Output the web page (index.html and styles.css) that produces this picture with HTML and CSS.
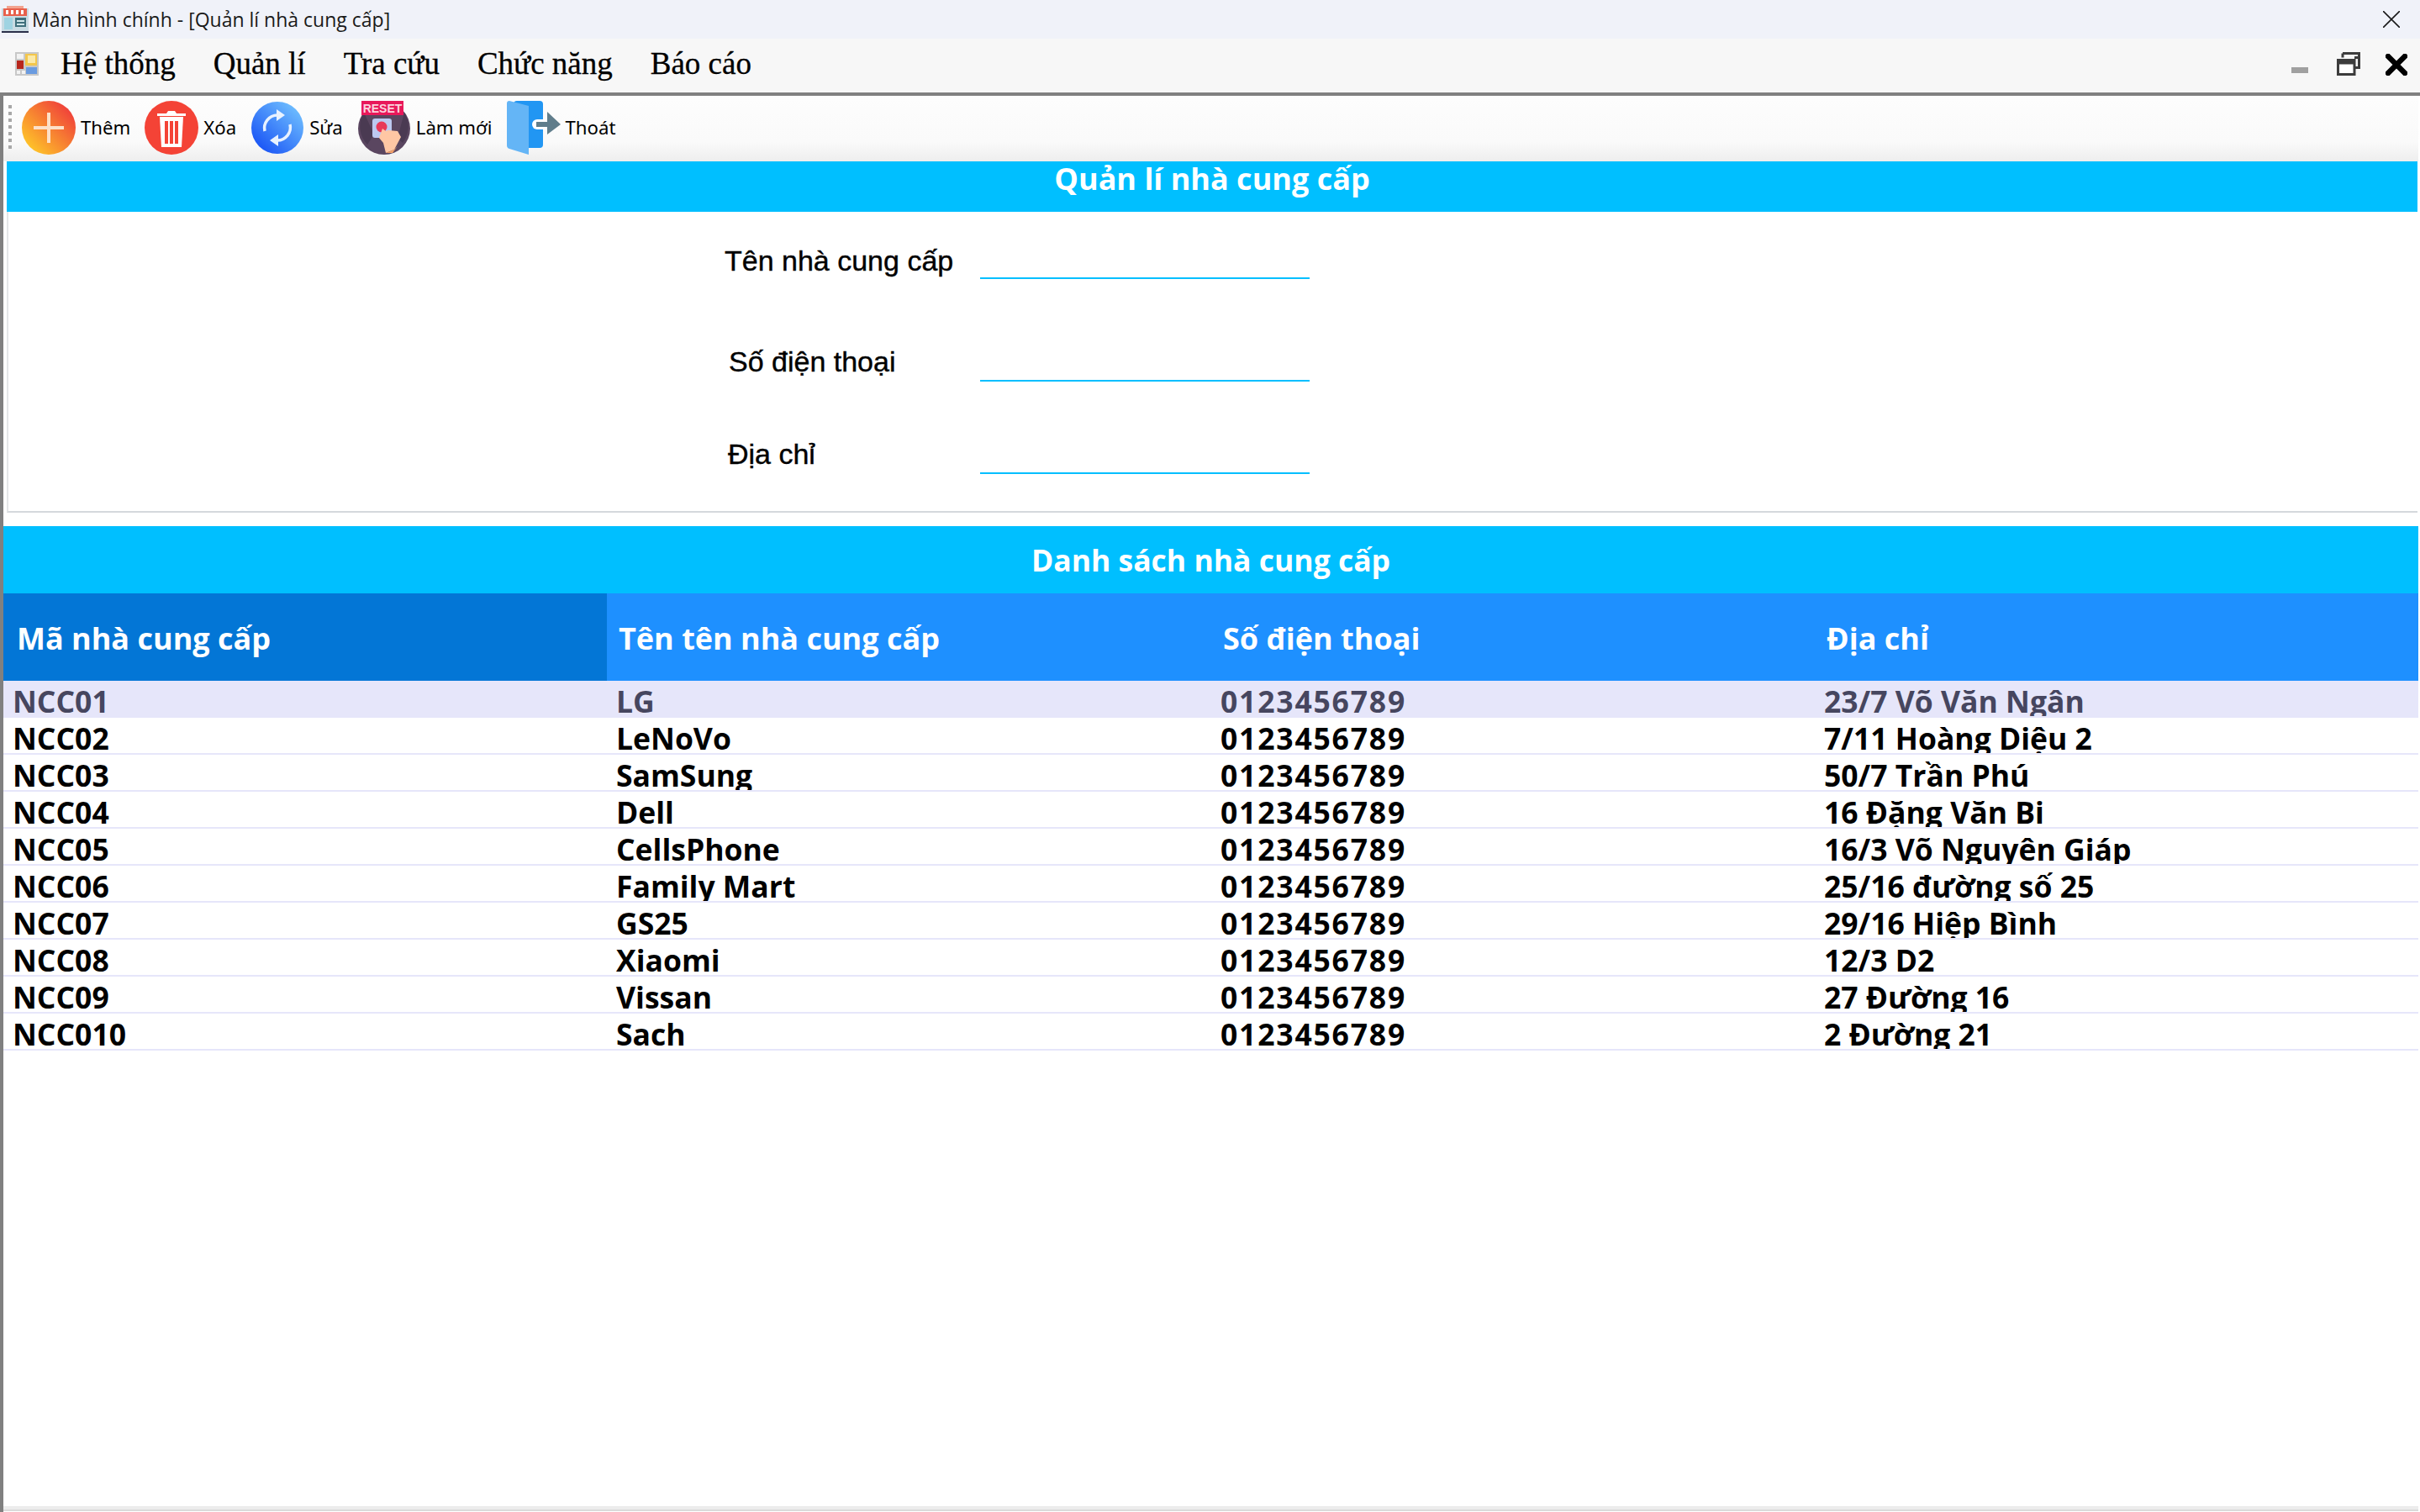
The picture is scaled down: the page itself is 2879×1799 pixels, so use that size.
FILE: index.html
```html
<!DOCTYPE html>
<html lang="vi">
<head>
    <meta charset="utf-8">
    <title>Màn hình chính</title>
    <link rel="stylesheet" href="styles.css">
</head>
<body>
    <div class="window">
        <!-- Title bar -->
        <div class="titlebar">
            <svg class="app-icon" viewBox="0 0 32 32">
                <rect x="0" y="3" width="32" height="27" fill="#c9dbe3"/>
                <rect x="2" y="3" width="28" height="9" fill="#e8604c"/>
                <path d="M5 5h3v5H5zM11 5h3v5h-3zM17 5h3v5h-3zM23 5h3v5h-3z" fill="#fff"/>
                <rect x="6" y="0" width="20" height="3" fill="#f2a38f"/>
                <path d="M3 14h10v14H3z" fill="#9fd3e2"/>
                <path d="M16 14h13v11H16z" fill="#3f6f7c"/>
                <path d="M18 17h9v2h-9zM18 21h9v2h-9z" fill="#cfe6ea"/>
                <rect x="0" y="30" width="32" height="2" fill="#2a2f4a"/>
            </svg>
            <span class="title-text">Màn hình chính - [Quản lí nhà cung cấp]</span>
            <svg class="title-close" viewBox="0 0 20 20">
                <path d="M0 0L20 20M20 0L0 20" stroke="#1a1a1a" stroke-width="1.6"/>
            </svg>
        </div>

        <!-- Menu -->
        <div class="menubar">
            <svg class="menu-icon" viewBox="0 0 28 28">
                <rect width="28" height="28" fill="#c8c8c8"/>
                <path d="M2 2h8v6H2zM2 22h4v4H2zM8 22h4v4H8z" fill="#f2f2f2"/>
                <rect x="2" y="10" width="8" height="10" fill="#b8261c"/>
                <rect x="12" y="2" width="14" height="14" fill="#f3c64b"/>
                <rect x="15" y="4" width="9" height="9" fill="#fbe9a8"/>
                <rect x="13" y="18" width="13" height="8" fill="#6a9be0"/>
            </svg>
            <span class="menu-item">Hệ thống</span>
            <span class="menu-item">Quản lí</span>
            <span class="menu-item">Tra cứu</span>
            <span class="menu-item">Chức năng</span>
            <span class="menu-item">Báo cáo</span>
            <div class="window-buttons">
                <svg class="btn-min" viewBox="0 0 20 8"><rect width="20" height="7" fill="#a0a0a0"/></svg>
                <svg class="btn-restore" viewBox="0 0 28 28">
                    <path d="M7 1.5h19.5v17H21M7 1.5v5M7 1.5h19.5v5H21" fill="none" stroke="#3c3c3c" stroke-width="3"/>
                    <rect x="1.5" y="9.5" width="19.5" height="17" fill="#fff" stroke="#3c3c3c" stroke-width="3"/>
                    <rect x="1.5" y="9.5" width="19.5" height="5" fill="#3c3c3c"/>
                </svg>
                <svg class="btn-close" viewBox="0 0 26 26">
                    <path d="M3 3L23 23M23 3L3 23" stroke="#000" stroke-width="6.5" stroke-linecap="square"/>
                </svg>
            </div>
        </div>

        <div class="workspace">
            <!-- Toolbar -->
            <div class="toolbar">
                <div class="grip"></div>
                <div class="tool">
                    <svg class="tool-icon" viewBox="0 0 64 64">
                        <defs>
                            <linearGradient id="add-grad" x1="0.1" y1="0.9" x2="0.9" y2="0.1">
                                <stop offset="0" stop-color="#ffc928"/>
                                <stop offset="1" stop-color="#ef3b3b"/>
                            </linearGradient>
                        </defs>
                        <circle cx="32" cy="32" r="32" fill="url(#add-grad)"/>
                        <path d="M32 14V50M14 32H50" stroke="#fde0c8" stroke-width="4"/>
                    </svg>
                    <span>Thêm</span>
                </div>
                <div class="tool">
                    <svg class="tool-icon" viewBox="0 0 64 64">
                        <circle cx="32" cy="32" r="32" fill="#f44336"/>
                        <path d="M15 15H49V18H15zM26 15l2-3h8l2 3z" fill="#fff"/>
                        <path d="M18 19H46L44 55H20Z" fill="#fff"/>
                        <path d="M24 24h4v27h-4zM30 24h4v27h-4zM36 24h4v27h-4z" fill="#f44336"/>
                    </svg>
                    <span>Xóa</span>
                </div>
                <div class="tool">
                    <svg class="tool-icon" viewBox="0 0 64 64">
                        <defs>
                            <linearGradient id="sync-grad" x1="0.15" y1="0.9" x2="0.9" y2="0.1">
                                <stop offset="0" stop-color="#1a55f5"/>
                                <stop offset="1" stop-color="#70c0ff"/>
                            </linearGradient>
                        </defs>
                        <circle cx="32" cy="32" r="31" fill="url(#sync-grad)"/>
                        <path d="M17 36A15.500 15.500 0 0 1 32 17L37 17M47 28A15.500 15.500 0 0 1 32 47L27 47" fill="none" stroke="#e8f2ff" stroke-width="3.500"/>
                        <path d="M31 10L41 17L31 24ZM33 40L23 47L33 54Z" fill="#e8f2ff"/>
                    </svg>
                    <span>Sửa</span>
                </div>
                <div class="tool">
                    <svg class="tool-icon" viewBox="0 0 64 64">
                        <circle cx="32" cy="33" r="31" fill="#5a4660"/>
                        <path d="M8 14L20 40L12 52A31 31 0 0 1 8 14ZM56 14L48 44L54 50A31 31 0 0 0 56 14Z" fill="#4a3a52"/>
                        <rect x="5" y="0" width="50" height="17" fill="#e8185a"/>
                        <text class="reset-text" x="30" y="14" text-anchor="middle">RESET</text>
                        <rect x="18" y="21" width="23" height="23" rx="3" fill="#bcc8f0"/>
                        <circle cx="29" cy="31" r="6.500" fill="#e8385a"/>
                        <path d="M30 33L34 36L37 35L48 36L52 43L44 58L34 62L31 50L26 44Z" fill="#ffc7a4"/>
                        <path d="M34 62L44 58L48 54L42 62Z" fill="#f2a068"/>
                    </svg>
                    <span>Làm mới</span>
                </div>
                <div class="tool">
                    <svg class="tool-icon" viewBox="0 0 64 64">
                        <rect x="8" y="0" width="35" height="56" rx="4" fill="#2196f3"/>
                        <path d="M3 0L26 6V64L3 57Q0 56 0 53V3Q0 0 3 0Z" fill="#64b5f6"/>
                        <rect x="30" y="22" width="20" height="12" rx="6" fill="#fff"/>
                        <path d="M35 25H48V13L64 28L48 40V31H35Z" fill="#607d8b"/>
                    </svg>
                    <span>Thoát</span>
                </div>
            </div>

            <!-- Form panel -->
            <div class="panel-heading">Quản lí nhà cung cấp</div>
            <div class="form-panel">
                <div class="form-row row-name">
                    <label class="form-label">Tên nhà cung cấp</label>
                    <input class="form-input" type="text">
                </div>
                <div class="form-row row-phone">
                    <label class="form-label">Số điện thoại</label>
                    <input class="form-input" type="text">
                </div>
                <div class="form-row row-address">
                    <label class="form-label">Địa chỉ</label>
                    <input class="form-input" type="text">
                </div>
            </div>

            <!-- Supplier list -->
            <div class="list-heading">Danh sách nhà cung cấp</div>
            <div class="grid">
                <div class="grid-head">
                    <div class="head-cell head-active">Mã nhà cung cấp</div>
                    <div class="head-cell">Tên tên nhà cung cấp</div>
                    <div class="head-cell">Số điện thoại</div>
                    <div class="head-cell">Địa chỉ</div>
                </div>
                <div class="grid-row row-selected">
                    <div class="cell">NCC01</div><div class="cell">LG</div><div class="cell cell-phone">0123456789</div><div class="cell">23/7 Võ Văn Ngân</div>
                </div>
                <div class="grid-row">
                    <div class="cell">NCC02</div><div class="cell">LeNoVo</div><div class="cell cell-phone">0123456789</div><div class="cell">7/11 Hoàng Diệu 2</div>
                </div>
                <div class="grid-row">
                    <div class="cell">NCC03</div><div class="cell">SamSung</div><div class="cell cell-phone">0123456789</div><div class="cell">50/7 Trần Phú</div>
                </div>
                <div class="grid-row">
                    <div class="cell">NCC04</div><div class="cell">Dell</div><div class="cell cell-phone">0123456789</div><div class="cell">16 Đặng Văn Bi</div>
                </div>
                <div class="grid-row">
                    <div class="cell">NCC05</div><div class="cell">CellsPhone</div><div class="cell cell-phone">0123456789</div><div class="cell">16/3 Võ Nguyên Giáp</div>
                </div>
                <div class="grid-row">
                    <div class="cell">NCC06</div><div class="cell">Family Mart</div><div class="cell cell-phone">0123456789</div><div class="cell">25/16 đường số 25</div>
                </div>
                <div class="grid-row">
                    <div class="cell">NCC07</div><div class="cell">GS25</div><div class="cell cell-phone">0123456789</div><div class="cell">29/16 Hiệp Bình</div>
                </div>
                <div class="grid-row">
                    <div class="cell">NCC08</div><div class="cell">Xiaomi</div><div class="cell cell-phone">0123456789</div><div class="cell">12/3 D2</div>
                </div>
                <div class="grid-row">
                    <div class="cell">NCC09</div><div class="cell">Vissan</div><div class="cell cell-phone">0123456789</div><div class="cell">27 Đường 16</div>
                </div>
                <div class="grid-row">
                    <div class="cell">NCC010</div><div class="cell">Sach</div><div class="cell cell-phone">0123456789</div><div class="cell">2 Đường 21</div>
                </div>
            </div>
            <div class="status-strip"></div>
        </div>
    </div>
</body>
</html>
```

FILE: styles.css
```css
* {
    box-sizing: border-box;
}

body {
    margin: 0;
    background: #fff;
    font-family: "Open Sans", "Noto Sans", sans-serif;
    overflow: hidden;
}

.window {
    display: flex;
    flex-direction: column;
    width: 2879px;
    height: 1799px;
}

/* Title bar */
.titlebar {
    display: flex;
    align-items: center;
    height: 46px;
    padding: 0 24px 0 2px;
    background: #f0f2f9;
    flex-shrink: 0;
}

.app-icon {
    width: 32px;
    height: 32px;
}

.title-text {
    margin-left: 4px;
    font-size: 23px;
    color: #1a1a1a;
}

.title-close {
    width: 20px;
    height: 20px;
    margin-left: auto;
}

/* Menu */
.menubar {
    display: flex;
    align-items: center;
    height: 68px;
    padding: 0 15px 4px 18px;
    background: #f7f7f7;
    border-bottom: 4px solid #808080;
    flex-shrink: 0;
}

.menu-icon {
    width: 28px;
    height: 28px;
    margin-right: 26px;
}

.menu-item {
    margin: 0 45px 2px 0;
    font-family: "Liberation Serif", serif;
    font-size: 37px;
    color: #000;
    -webkit-text-stroke: 0.3px #000;
}

.window-buttons {
    display: flex;
    align-items: flex-end;
    margin-left: auto;
    gap: 30px;
}

.btn-min {
    width: 20px;
    height: 8px;
    margin: 0 4px 2px 0;
}

.btn-restore {
    width: 28px;
    height: 28px;
}

.btn-close {
    width: 26px;
    height: 26px;
}

/* Main area */
.workspace {
    display: flex;
    flex-direction: column;
    flex: 1;
    min-height: 0;
    padding-right: 2px;
    border-left: 4px solid #808080;
    background: #fff;
}

.toolbar {
    display: flex;
    align-items: center;
    gap: 17px;
    height: 78px;
    padding: 0 0 2px 6px;
    background: linear-gradient(#fdfdfd 0%, #fafafa 70%, #eeeeee 100%);
    flex-shrink: 0;
}

.grip {
    width: 4px;
    height: 54px;
    margin-right: -5px;
    background: repeating-linear-gradient(#a8a8a8 0 4px, transparent 4px 8px);
}

.tool {
    display: flex;
    align-items: center;
    gap: 6px;
    font-family: "Noto Sans", sans-serif;
    font-size: 22.2px;
    color: #000;
}

.tool span {
    margin-bottom: 2px;
}

.tool-icon {
    width: 64px;
    height: 64px;
}

.reset-text {
    font-family: "Liberation Sans", sans-serif;
    font-size: 14px;
    font-weight: 700;
    fill: #fbd3de;
}

.panel-heading {
    height: 60px;
    margin: 0 1px 0 4px;
    background: #00bfff;
    color: #fff;
    font-size: 36px;
    font-weight: 700;
    line-height: 42px;
    text-align: center;
    flex-shrink: 0;
}

.form-panel {
    height: 358px;
    margin: 0 1px 0 4px;
    padding-left: 852px;
    background: #fff;
    border-left: 2px solid #e4e6e8;
    border-bottom: 2px solid #d5d8dc;
    flex-shrink: 0;
}

.form-row {
    display: grid;
    grid-template-columns: 304px 392px;
    align-items: end;
}

.row-name {
    height: 80px;
}

.row-phone {
    height: 122px;
}

.row-address {
    height: 110px;
}

.form-label {
    margin-bottom: 7px;
    font-family: "Liberation Sans", sans-serif;
    font-size: 34px;
    line-height: 34px;
    color: #000;
    -webkit-text-stroke: 0.4px #000;
}

.row-name .form-label {
    margin-bottom: 5px;
}

.row-phone .form-label {
    padding-left: 5px;
}

.row-address .form-label {
    padding-left: 4px;
}

.form-input {
    width: 392px;
    height: 10px;
    padding: 0;
    background: transparent;
    border: 0;
    border-bottom: 2px solid #00bfff;
    outline: 0;
}

.list-heading {
    height: 80px;
    margin-top: 16px;
    background: #00bfff;
    color: #fff;
    font-size: 35.5px;
    font-weight: 700;
    line-height: 80px;
    text-align: center;
    flex-shrink: 0;
}

.grid {
    flex: 1;
}

.grid-head,
.grid-row {
    display: grid;
    grid-template-columns: 718px 719px 718px 1fr;
}

.grid-head {
    height: 104px;
    background: #1e90ff;
}

.head-cell {
    padding: 30px 0 0 14px;
    color: #fff;
    font-size: 36px;
    font-weight: 700;
    line-height: 48px;
}

.head-active {
    padding-left: 16px;
    background: #0376d6;
}

.grid-row {
    height: 44px;
    border-bottom: 2px solid #e6e6fa;
    color: #000;
    font-size: 35.5px;
    font-weight: 700;
}

/* text is cut at the bottom of the row, same as the real grid */
.cell {
    height: 42px;
    padding: 6px 0 0 11px;
    line-height: 36px;
    overflow: hidden;
    white-space: nowrap;
}

.cell-phone {
    letter-spacing: 1.8px;
}

.row-selected {
    background: #e6e6fa;
    color: #46465f;
}

.status-strip {
    height: 6px;
    margin-bottom: 1px;
    background: #ececec;
    border-bottom: 2px solid #dadada;
    flex-shrink: 0;
}
```
